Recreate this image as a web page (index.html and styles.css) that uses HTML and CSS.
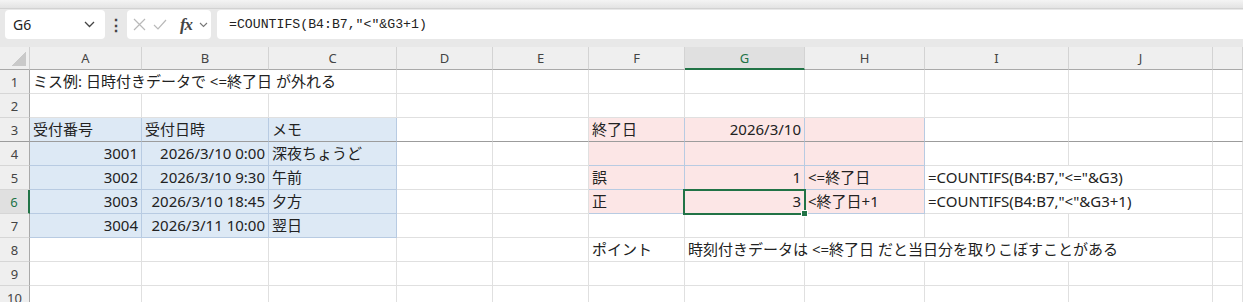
FILE: index.html
```html
<!DOCTYPE html>
<html lang="ja">
<head>
  <meta charset="UTF-8">
  <title>COUNTIFS ミス例</title>
  <link rel="stylesheet" href="styles.css">
</head>
<body>
  <div class="ribbon-edge"></div>
  <div class="formula-bar">
    <div class="name-box">
      <span>G6</span>
      <svg width="11" height="7" viewBox="0 0 11 7"><path d="M1 1 L5.5 5.5 L10 1" fill="none" stroke="#444" stroke-width="1.3"/></svg>
    </div>
    <div class="dots">⋮</div>
    <div class="fx-box">
      <svg width="13" height="13" viewBox="0 0 13 13"><path d="M1 1 L12 12 M12 1 L1 12" stroke="#b9b9b9" stroke-width="1.2"/></svg>
      <svg width="14" height="12" viewBox="0 0 14 12"><path d="M1 6 L5 10 L13 1" fill="none" stroke="#b9b9b9" stroke-width="1.2"/></svg>
      <span class="fx"><i>f</i><i>x</i></span>
      <svg width="9" height="6" viewBox="0 0 9 6"><path d="M1 1 L4.5 4.5 L8 1" fill="none" stroke="#777" stroke-width="1.1"/></svg>
    </div>
    <div class="formula-input">=COUNTIFS(B4:B7,"&lt;"&amp;G3+1)</div>
  </div>

  <div class="sheet" id="sheet"></div>

  <script>
    const cols = ["A","B","C","D","E","F","G","H","I","J","K"];
    const data = {
      A1: { v: "ミス例: 日時付きデータで <=終了日 が外れる", span: 3 },
      A3: { v: "受付番号" }, B3: { v: "受付日時" }, C3: { v: "メモ" },
      A4: { v: "3001", num: true }, B4: { v: "2026/3/10 0:00", num: true }, C4: { v: "深夜ちょうど" },
      A5: { v: "3002", num: true }, B5: { v: "2026/3/10 9:30", num: true }, C5: { v: "午前" },
      A6: { v: "3003", num: true }, B6: { v: "2026/3/10 18:45", num: true }, C6: { v: "夕方" },
      A7: { v: "3004", num: true }, B7: { v: "2026/3/11 10:00", num: true }, C7: { v: "翌日" },
      F3: { v: "終了日" }, G3: { v: "2026/3/10", num: true },
      F5: { v: "誤" }, G5: { v: "1", num: true }, H5: { v: "<=終了日" },
      I5: { v: "=COUNTIFS(B4:B7,\"<=\"&G3)", span: 2 },
      F6: { v: "正" }, G6: { v: "3", num: true }, H6: { v: "<終了日+1" },
      I6: { v: "=COUNTIFS(B4:B7,\"<\"&G3+1)", span: 2 },
      F8: { v: "ポイント" },
      G8: { v: "時刻付きデータは <=終了日 だと当日分を取りこぼすことがある", span: 4 }
    };

    function inRange(c, r, c1, c2, r1, r2) {
      return c >= c1 && c <= c2 && r >= r1 && r <= r2;
    }

    const sheet = document.getElementById("sheet");
    function add(cls, text) {
      const d = document.createElement("div");
      d.className = cls;
      if (text) d.textContent = text;
      sheet.appendChild(d);
      return d;
    }

    add("corner");
    cols.forEach((c, i) => add(c === "G" ? "ch sel" : "ch", i < 10 ? c : ""));

    for (let r = 1; r <= 10; r++) {
      let cls = "rh";
      if (r === 6) cls += " sel";
      if (r === 3) cls += " freeze";
      add(cls, String(r));
      let skip = 0;
      cols.forEach((c, i) => {
        if (skip > 0) { skip--; return; }
        const cell = data[c + r] || {};
        let k = "cell";
        if (inRange(i, r, 0, 2, 3, 7)) k += " blue";
        if (inRange(i, r, 5, 7, 3, 6)) k += " pink";
        if (cell.num) k += " num";
        if (r === 3) k += " freeze";
        if (c + r === "G6") k += " active";
        const d = add(k, cell.v);
        if (cell.span) {
          d.style.gridColumn = "span " + cell.span;
          skip = cell.span - 1;
        }
      });
    }
  </script>
</body>
</html>
```

FILE: styles.css
```css
body {
  margin: 0;
  background: #fff;
  overflow: hidden;
  font-family: "Noto Sans", "Noto Sans CJK JP", sans-serif;
  color: #222;
}
.ribbon-edge {
  height: 8px;
  background: linear-gradient(#f4f4f4, #e3e3e3);
  border-bottom: 1px solid #d2d2d2;
}
.formula-bar {
  display: flex;
  align-items: center;
  height: 38px;
  padding: 1px 0 8px 5px;
  background: #e8e8e8;
  box-sizing: border-box;
}
.name-box {
  width: 100px;
  height: 29px;
  background: #fff;
  border-radius: 4px;
  display: flex;
  align-items: center;
  justify-content: space-between;
  padding: 0 10px 0 8px;
  box-sizing: border-box;
  font-size: 14px;
  color: #222;
}
.dots {
  width: 22px;
  text-align: center;
  font-size: 16px;
  font-weight: bold;
  color: #444;
}
.fx-box {
  width: 84px;
  height: 29px;
  background: #fff;
  border-radius: 4px;
  display: flex;
  align-items: center;
  justify-content: space-between;
  padding: 0 3px 0 6px;
  box-sizing: border-box;
}
.fx {
  font-family: "Liberation Serif", serif;
  font-size: 17px;
  font-weight: bold;
  color: #444;
  letter-spacing: -1px;
  margin-left: 6px;
}
.formula-input {
  flex: 1;
  height: 29px;
  margin-left: 6px;
  background: #fff;
  border-radius: 4px 0 0 4px;
  font-family: "Liberation Mono", monospace;
  font-size: 13.2px;
  line-height: 29px;
  padding-left: 12px;
  color: #222;
}
.sheet {
  display: grid;
  grid-template-columns: 30px 112px 127px 128px 96px 96px 96px 120px 120px 144px 144px 30px;
  grid-template-rows: 23px repeat(10, 24px);
}
.sheet > div {
  box-sizing: border-box;
  white-space: nowrap;
}
.corner {
  background: #efefef linear-gradient(to top left, #c9c9c9 50%, transparent 50%) no-repeat right 3px bottom 3px / 15px 15px;
  border-right: 1px solid #d0d0d0;
  border-bottom: 1px solid #a9a9a9;
}
.ch {
  background: #efefef;
  border-right: 1px solid #d3d3d3;
  border-bottom: 1px solid #a9a9a9;
  text-align: center;
  font-size: 13px;
  line-height: 22px;
  color: #444;
}
.ch.sel {
  background: #e0e0e0;
  color: #217346;
  border-bottom: 2px solid #217346;
}
.rh {
  background: #efefef;
  border-right: 1px solid #a9a9a9;
  border-bottom: 1px solid #d6d6d6;
  text-align: center;
  font-size: 13px;
  line-height: 24px;
  color: #444;
}
.rh.sel {
  background: #e0e0e0;
  color: #217346;
  border-right: 2px solid #217346;
}
.cell {
  border-right: 1px solid #e0e0e0;
  border-bottom: 1px solid #e0e0e0;
  padding: 0 3px;
  overflow: hidden;
  font-family: "Noto Sans", "Noto Sans CJK JP", sans-serif;
  font-size: 15px;
  line-height: 23px;
  color: #222;
}
.blue {
  background: #dde9f5;
  border-color: #b8cbe2;
}
.pink {
  background: #fce6e6;
  border-color: #b8cbe2;
}
.num {
  text-align: right;
}
.freeze {
  border-bottom-color: #9c9c9c !important;
}
.active {
  position: relative;
  z-index: 1;
  overflow: visible;
}
.active::after {
  content: "";
  position: absolute;
  top: -1px;
  left: -2px;
  right: -2px;
  bottom: -2px;
  border: 2px solid #217346;
}
.active::before {
  content: "";
  position: absolute;
  right: -4px;
  bottom: -4px;
  width: 5px;
  height: 5px;
  background: #217346;
  border: 1px solid #fff;
  z-index: 2;
}
```
